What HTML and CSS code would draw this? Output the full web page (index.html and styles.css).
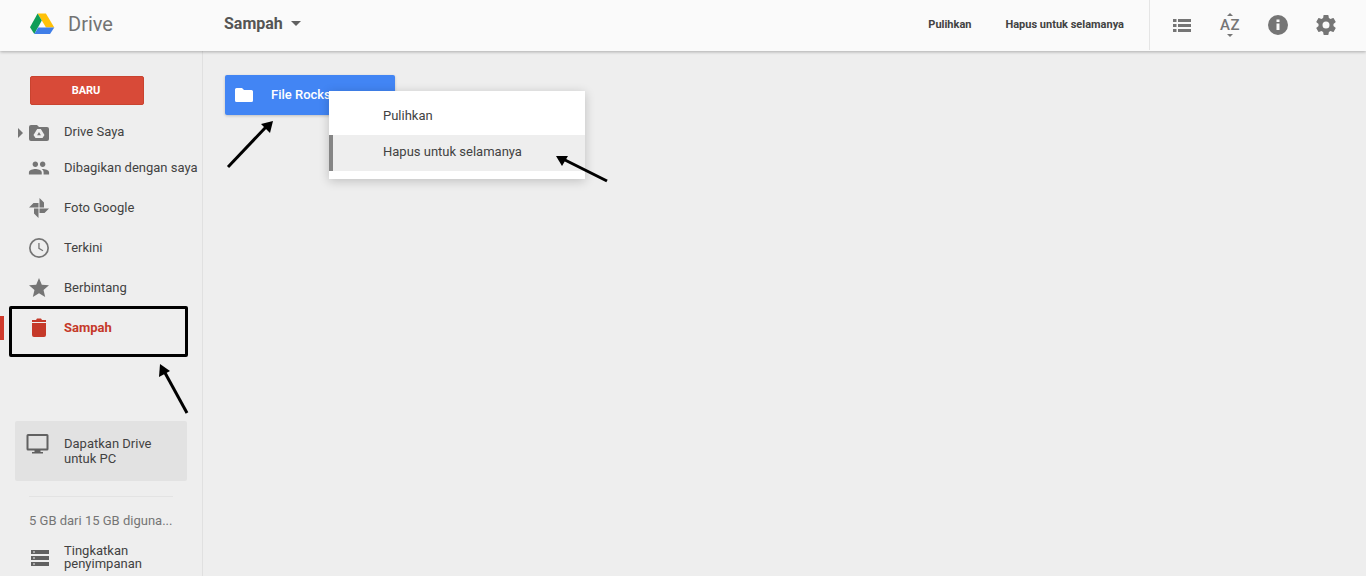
FILE: index.html
```html
<!DOCTYPE html>
<html lang="id">
<head>
<meta charset="utf-8">
<title>Sampah - Drive</title>
<link rel="stylesheet" href="styles.css">
</head>
<body>
<div class="app">
  <header class="topbar">
    <div class="brand">
      <svg class="logo" width="26" height="22" viewBox="0 0 26 22">
        <path fill="#ffc107" d="M8.600 0.500h8.300l8.400 14h-8.300z"/>
        <path fill="#0f9d58" d="M8.600 0.500l4.200 7L5.300 21 1 14.200z"/>
        <path fill="#3f7ee8" d="M5.300 21l3.900-6.500h16.100L21 21z"/>
      </svg>
      <span class="brand-name">Drive</span>
    </div>
    <div class="crumb"><span>Sampah</span><i class="caret"></i></div>
    <div class="actions">
      <span class="action act-restore">Pulihkan</span>
      <span class="action">Hapus untuk selamanya</span>
    </div>
    <div class="tools">
      <svg class="tool" width="24" height="24" viewBox="0 0 24 24"><path fill="#757575" d="M3 6h3.500v3H3zm0 5h3.500v3H3zm0 5h3.500v3H3zM8 6h13v3H8zm0 5h13v3H8zm0 5h13v3H8z"/></svg>
      <span class="tool az">
        <svg class="az-up" width="6" height="3" viewBox="0 0 6 3"><path fill="#757575" d="M3 0l3 3H0z"/></svg>
        <span class="az-text">AZ</span>
        <svg class="az-down" width="6" height="3" viewBox="0 0 6 3"><path fill="#757575" d="M3 3L0 0h6z"/></svg>
      </span>
      <svg class="tool" width="24" height="24" viewBox="0 0 24 24"><path fill="#757575" d="M12 2a10 10 0 1 0 0 20 10 10 0 0 0 0-20zm1.500 15h-3v-6.500h3zm0-8h-3V6.500h3z"/></svg>
      <svg class="tool" width="24" height="24" viewBox="0 0 24 24"><path fill="#757575" d="M19.430 12.980c.04-.32.070-.64.070-.98s-.030-.66-.070-.98l2.110-1.650c.190-.150.240-.420.120-.640l-2-3.460c-.120-.220-.390-.300-.610-.220l-2.490 1c-.520-.400-1.080-.730-1.690-.980l-.380-2.650A.488.488 0 0 0 14 2h-4c-.250 0-.460.180-.490.420l-.380 2.650c-.610.250-1.170.590-1.690.980l-2.490-1c-.230-.090-.490 0-.610.220l-2 3.460c-.130.220-.070.490.120.640l2.110 1.650c-.040.320-.070.650-.070.980s.030.660.070.980l-2.110 1.650c-.190.150-.240.420-.120.640l2 3.460c.120.220.390.300.610.220l2.490-1c.520.400 1.080.730 1.690.980l.380 2.650c.030.240.240.420.490.420h4c.250 0 .460-.180.490-.420l.380-2.650c.610-.250 1.170-.590 1.690-.980l2.490 1c.230.090.490 0 .610-.220l2-3.460c.120-.220.070-.490-.120-.640l-2.110-1.650zM12 15.500a3.500 3.500 0 1 1 0-7 3.500 3.500 0 0 1 0 7z"/></svg>
    </div>
  </header>

  <div class="body">
    <aside class="sidebar">
      <button class="new-btn">BARU</button>
      <nav class="nav">
        <div class="nav-row nav-first">
          <i class="expander"></i>
          <svg class="nav-icon icon-drive" width="20" height="16" viewBox="0 0 20 16"><path fill="#757575" fill-rule="evenodd" d="M2 0h6l2 2h8a2 2 0 0 1 2 2v10a2 2 0 0 1-2 2H2a2 2 0 0 1-2-2V2a2 2 0 0 1 2-2zm6.200 4h3.600l3.700 6-2 3H6.500l-2-3zM10 7l-1.900 3.200h3.800z"/></svg>
          <span>Drive Saya</span>
        </div>
        <div class="nav-row nav-shared">
          <svg class="nav-icon" width="22" height="22" viewBox="0 0 24 24"><path fill="#757575" d="M16 11c1.660 0 2.990-1.340 2.990-3S17.660 5 16 5s-3 1.340-3 3 1.340 3 3 3zm-8 0c1.660 0 2.990-1.340 2.990-3S9.660 5 8 5 5 6.340 5 8s1.340 3 3 3zm0 2c-2.330 0-7 1.170-7 3.500V19h14v-2.500C15 14.170 10.330 13 8 13zm8 0c-.290 0-.620.020-.970.050 1.160.840 1.970 1.970 1.970 3.450V19h6v-2.500c0-2.330-4.670-3.500-7-3.500z"/></svg>
          <span>Dibagikan dengan saya</span>
        </div>
        <div class="nav-row">
          <svg class="nav-icon" width="20" height="20" viewBox="0 0 20 20"><path fill="#757575" d="M10.500 9.500V0L15 4.500v5zM10.500 10.500H20L15.500 15h-5zM9.500 10.500V20L5 15.500v-5zM9.500 9.500H0L4.500 5h5z"/></svg>
          <span>Foto Google</span>
        </div>
        <div class="nav-row">
          <svg class="nav-icon" width="24" height="24" viewBox="0 0 24 24"><path fill="#757575" d="M12 2a10 10 0 1 0 0 20 10 10 0 0 0 0-20zm0 18.300a8.300 8.300 0 1 1 0-16.600 8.300 8.300 0 0 1 0 16.600zM12.600 7h-1.300v5.700l4.400 2.600.6-1.050-3.700-2.200z"/></svg>
          <span>Terkini</span>
        </div>
        <div class="nav-row">
          <svg class="nav-icon" width="24" height="24" viewBox="0 0 24 24"><path fill="#757575" d="M12 17.270L18.180 21l-1.640-7.030L22 9.240l-7.190-.610L12 2 9.190 8.630 2 9.240l5.460 4.730L5.820 21z"/></svg>
          <span>Berbintang</span>
        </div>
        <div class="nav-row nav-active">
          <svg class="nav-icon" width="24" height="24" viewBox="0 0 24 24"><path fill="#c53929" d="M5 8h14v12a2 2 0 0 1-2 2H7a2 2 0 0 1-2-2zM5 5h4l1-1.500h4L15 5h4v2H5z"/></svg>
          <span>Sampah</span>
        </div>
      </nav>
      <div class="promo">
        <svg class="promo-icon" width="24" height="24" viewBox="0 0 24 24"><path fill="#616161" d="M2 2h19a1.500 1.500 0 0 1 1.500 1.500V17a1.500 1.500 0 0 1-1.500 1.500h-6.500V20H17v1.500H6V20h2.500v-1.500H2A1.500 1.500 0 0 1 .5 17V3.500A1.500 1.500 0 0 1 2 2zm.5 2v12.500h18V4z"/></svg>
        <span>Dapatkan Drive<br>untuk PC</span>
      </div>
      <hr class="rule">
      <div class="quota">5 GB dari 15 GB diguna...</div>
      <div class="upgrade">
        <svg class="upgrade-icon" width="18" height="16" viewBox="0 0 18 16"><path fill="#616161" fill-rule="evenodd" d="M0 0h18v4H0zm0 6h18v4H0zm0 6h18v4H0zM2 1.500v1h2v-1zm0 6v1h2v-1zm0 6v1h2v-1z"/></svg>
        <span>Tingkatkan<br>penyimpanan</span>
      </div>
    </aside>
    <main class="content">
      <div class="file-tile">
        <svg width="18" height="14" viewBox="0 0 18 14"><path fill="#fff" d="M1.500 0h5.500l2 2h7.500A1.500 1.500 0 0 1 18 3.500v9a1.500 1.500 0 0 1-1.500 1.500h-15A1.500 1.500 0 0 1 0 12.500v-11A1.500 1.500 0 0 1 1.500 0z"/></svg>
        <span class="file-name">File Rocks</span>
      </div>
    </main>
  </div>

  <div class="menu">
    <div class="menu-item">Pulihkan</div>
    <div class="menu-item menu-hover">Hapus untuk selamanya</div>
  </div>

  <div class="note-box"></div>
  <svg class="notes" width="1366" height="576" viewBox="0 0 1366 576">
    <path d="M228 167L266 127" stroke="#000" stroke-width="3" fill="none"/>
    <path d="M273 121L270 133L261 124z" fill="#000"/>
    <path d="M607 181L563 159" stroke="#000" stroke-width="3" fill="none"/>
    <path d="M556 156L568 156L562 166z" fill="#000"/>
    <path d="M187 413L164 371" stroke="#000" stroke-width="3" fill="none"/>
    <path d="M160 364L170 371L159 377z" fill="#000"/>
  </svg>
</div>
</body>
</html>
```
FILE: styles.css
```css
* { box-sizing: border-box; }
html, body { margin: 0; height: 100%; overflow: hidden; }
body { font-family: Roboto, "Liberation Sans", sans-serif; font-size: 13px; color: #424242; background: #eee; }
.app { position: relative; width: 1366px; height: 576px; display: flex; flex-direction: column; }

.topbar { position: relative; z-index: 2; height: 51px; flex: none; display: flex; align-items: center; background: #fafafa; box-shadow: 0 1px 3px rgba(0,0,0,.28); }
.brand { width: 224px; flex: none; display: flex; align-items: center; padding-left: 29px; }
.logo { flex: none; margin-top: -3px; }
.brand-name { margin-left: 13px; font-size: 20px; color: #737373; margin-top: -3px; }
.crumb { display: flex; align-items: center; font-size: 16px; font-weight: 700; color: #555; margin-top: -4px; }
.caret { width: 0; height: 0; margin-left: 8px; border: 5px solid transparent; border-top-color: #616161; border-bottom-width: 0; }
.actions { margin-left: auto; display: flex; align-items: center; font-size: 11px; color: #424242; margin-top: -3px; }
.act-restore { margin-right: 34px; }
.action { white-space: nowrap; font-weight: 700; }
.tools { margin-left: 25px; width: 217px; height: 50px; flex: none; border-left: 1px solid #e5e5e5; display: flex; align-items: center; padding-left: 20px; gap: 24px; margin-top: -2px; }
.tool { flex: none; width: 24px; height: 24px; }
.az { position: relative; display: block; text-align: center; }
.az-text { position: absolute; left: 0; right: 0; top: 3px; font-size: 15px; line-height: 18px; color: #757575; letter-spacing: .5px; font-weight: 500; }
.az-up { position: absolute; left: 9px; top: 0; }
.az-down { position: absolute; left: 9px; top: 21px; }

.body { flex: 1; display: flex; min-height: 0; }
.sidebar { width: 203px; flex: none; border-right: 1px solid #e0e0e0; padding-top: 25px; position: relative; }
.new-btn { display: block; width: 114px; height: 29px; margin: 0 0 0 30px; padding: 0 2px 0 0; border: 1px solid #c9432f; border-radius: 2px; background: #d84a38; color: #fff; font: 700 11px Roboto, "Liberation Sans", sans-serif; text-align: center; }
.nav { margin-top: 9px; }
.nav-row { position: relative; height: 40px; display: flex; align-items: center; padding-left: 64px; color: #424242; white-space: nowrap; padding-bottom: 1px; }
.nav-first { height: 36px; }
.nav-shared { height: 36px; margin-bottom: 2px; }
.nav-row span { display: block; }
.nav-icon { position: absolute; left: 39px; top: 50%; transform: translate(-50%, -50%); }
.icon-drive { margin-top: 1px; }
.expander { position: absolute; left: 18px; top: 50%; margin-top: -4px; border: 5px solid transparent; border-left-color: #757575; border-right-width: 0; }
.nav-active { font-weight: 700; color: #c53929; }
.nav-active::before { content: ""; position: absolute; left: 0; top: 8px; width: 4px; height: 24px; background: #d0392b; }
.nav-active .nav-icon { top: 19px; }
.nav-active span { margin-top: -1px; }

.promo { position: relative; margin: 73px 0 0 15px; width: 172px; height: 60px; background: #e2e2e2; border-radius: 2px; padding: 15px 0 0 49px; line-height: 15px; color: #424242; }
.promo-icon { position: absolute; left: 11px; top: 11px; }
.rule { margin: 15px 29px 0; width: 144px; height: 1px; border: 0; background: #e3e3e3; }
.quota { margin: 16px 0 0 29px; color: #757575; line-height: 16px; white-space: nowrap; }
.upgrade { position: relative; margin-top: 15px; padding-left: 64px; line-height: 13px; color: #424242; }
.upgrade-icon { position: absolute; left: 31px; top: 6px; }

.content { flex: 1; padding: 24px 0 0 22px; }
.file-tile { width: 170px; height: 40px; display: flex; align-items: center; padding-left: 10px; gap: 18px; background: #4285f4; border-radius: 2px; color: #fff; font-weight: 500; box-shadow: 0 1px 3px rgba(0,0,0,.2); }
.file-name { margin-top: -2px; }

.menu { position: absolute; z-index: 3; left: 329px; top: 91px; width: 256px; padding: 8px 0; background: #fff; box-shadow: 0 2px 10px rgba(0,0,0,.2); }
.menu-item { height: 36px; padding: 0 0 4px 54px; display: flex; align-items: center; color: #424242; }
.menu-hover { background: #eee; border-left: 4px solid #858585; padding-left: 50px; }

.note-box { position: absolute; z-index: 4; left: 9px; top: 306px; width: 179px; height: 51px; border: 3px solid #000; border-radius: 2px; }
.notes { position: absolute; z-index: 4; left: 0; top: 0; pointer-events: none; }
```
